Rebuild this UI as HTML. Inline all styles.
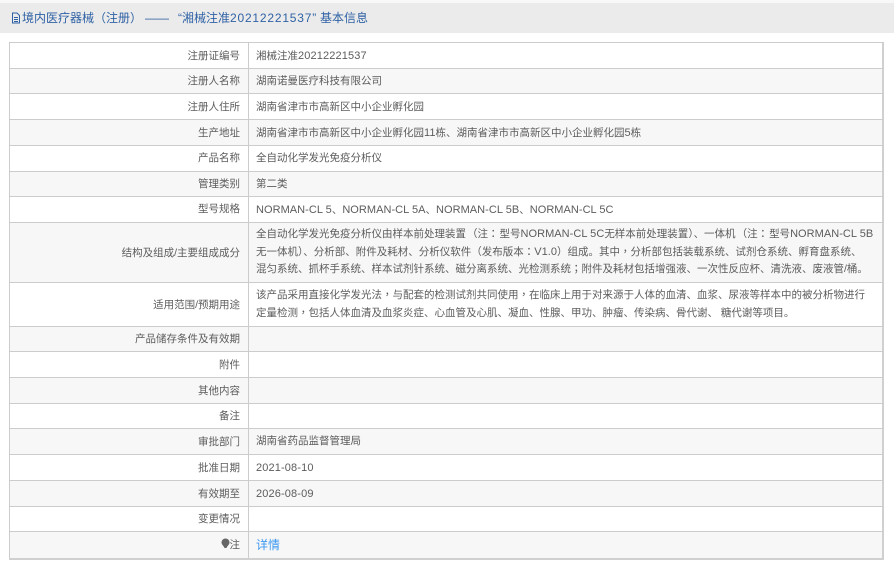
<!DOCTYPE html>
<html><head><meta charset="utf-8">
<style>
html,body{margin:0;padding:0;background:#fff;width:894px;height:564px;overflow:hidden;font-family:"Liberation Sans","Noto Sans CJK SC",sans-serif;}
.top{position:absolute;left:0;top:0;width:894px;height:3px;background:#f8f8f8}
.hd{position:absolute;left:0;top:3px;width:894px;height:30px;background:#ebebeb;color:#2f62a5;font-size:12px;line-height:30px;white-space:nowrap;}
.hd svg{position:absolute;left:11px;top:9px}
.hd span{position:absolute;top:0}
.hd i{font-style:normal;letter-spacing:.8px}
.r{position:absolute;left:9px;width:875px;box-sizing:border-box;border-top:1px solid #ccc;border-left:1px solid #ccc;border-right:2px solid #d0d0d0;font-size:10.500px;color:#5c5c5c;white-space:nowrap}
.g{background:#f7f7f7}
.l{position:absolute;right:642px;top:0;height:24px;line-height:24px}
.l svg{vertical-align:-1px}
.m{top:0;bottom:0;height:auto;display:flex;align-items:center;line-height:18px}
.v{position:absolute;left:238px;right:0;top:0;bottom:0;border-left:1px solid #ccc;padding-left:7px;line-height:24px}
.v div.x{line-height:17.500px;position:absolute;top:3px}
.y .v div.x{top:4px}
.t .l,.t .v,.lt .l,.vt .v{line-height:26px}
b{font-weight:normal;font-size:11px;letter-spacing:.04px}
b.d{letter-spacing:.13px}
u{text-decoration:none;font-family:"Liberation Sans","Noto Sans CJK TC",sans-serif}
a{color:#3d97f0;text-decoration:none;font-size:12px}
.end{position:absolute;left:9px;top:558px;width:875px;height:2px;background:#d0d0d0}
</style></head><body>
<div class="top"></div>
<div class="hd"><svg width="10" height="12" viewBox="0 0 10 12" fill="none" stroke="#2f62a5"><path d="M1.500 1h4.500l2.500 2.500v7.500h-7zM3 5.500h4M3 7.500h4M3 9.500h4"/></svg><span style="left:22px">境内医疗器械<u>（</u>注册<u>）</u></span><span style="left:145px">——</span><span style="left:178px">“湘械注准<i>20212221537</i>”</span><span style="left:320px">基本信息</span></div>

<div class="r t" style="top:42px;height:26px"><div class="l">注册证编号</div><div class="v">湘械注准<b class="d">20212221537</b></div></div>
<div class="r g" style="top:68px;height:25px"><div class="l">注册人名称</div><div class="v">湖南诺曼医疗科技有限公司</div></div>
<div class="r t" style="top:93px;height:26px"><div class="l">注册人住所</div><div class="v">湖南省津市市高新区中小企业孵化园</div></div>
<div class="r g t" style="top:119px;height:26px"><div class="l">生产地址</div><div class="v">湖南省津市市高新区中小企业孵化园<b>11</b>栋、湖南省津市市高新区中小企业孵化园<b>5</b>栋</div></div>
<div class="r" style="top:145px;height:26px"><div class="l">产品名称</div><div class="v">全自动化学发光免疫分析仪</div></div>
<div class="r g" style="top:171px;height:25px"><div class="l">管理类别</div><div class="v">第二类</div></div>
<div class="r vt" style="top:196px;height:26px"><div class="l">型号规格</div><div class="v"><b>NORMAN-CL 5</b>、<b>NORMAN-CL 5A</b>、<b>NORMAN-CL 5B</b>、<b>NORMAN-CL 5C</b></div></div>
<div class="r g" style="top:222px;height:60px"><div class="l m">结构及组成/主要组成成分</div><div class="v"><div class="x">全自动化学发光免疫分析仪由样本前处理装置<u style="padding-left:1px">（</u>注<u style="padding-right:1px">：</u>型号<b>NORMAN-CL 5C</b>无样本前处理装置<u>）</u>、一体机<u style="padding-left:1px">（</u>注<u style="padding-right:1px">：</u>型号<b>NORMAN-CL 5B</b><br>无一体机<u>）</u>、分析部、附件及耗材、分析仪软件<u>（</u>发布版本<u>：</u><b>V1.0</b><u>）</u>组成。其中<u>，</u>分析部包括装载系统、试剂仓系统、孵育盘系统、<br>混匀系统、抓杯手系统、样本试剂针系统、磁分离系统、光检测系统<u>；</u>附件及耗材包括增强液、一次性反应杯、清洗液、废液管/桶。</div></div></div>
<div class="r y" style="top:282px;height:44px"><div class="l m">适用范围/预期用途</div><div class="v"><div class="x">该产品采用直接化学发光法<u>，</u>与配套的检测试剂共同使用<u>，</u>在临床上用于对来源于人体的血清、血浆、尿液等样本中的被分析物进行<br>定量检测<u>，</u>包括人体血清及血浆炎症、心血管及心肌、凝血、性腺、甲功、肿瘤、传染病、骨代谢、 糖代谢等项目。</div></div></div>
<div class="r g" style="top:326px;height:25px"><div class="l">产品储存条件及有效期</div><div class="v"></div></div>
<div class="r t" style="top:351px;height:26px"><div class="l">附件</div><div class="v"></div></div>
<div class="r g t" style="top:377px;height:26px"><div class="l">其他内容</div><div class="v"></div></div>
<div class="r" style="top:403px;height:25px"><div class="l">备注</div><div class="v"></div></div>
<div class="r g lt" style="top:428px;height:26px"><div class="l">审批部门</div><div class="v">湖南省药品监督管理局</div></div>
<div class="r t" style="top:454px;height:26px"><div class="l">批准日期</div><div class="v"><b class="d">2021-08-10</b></div></div>
<div class="r g t" style="top:480px;height:26px"><div class="l">有效期至</div><div class="v"><b class="d">2026-08-09</b></div></div>
<div class="r" style="top:506px;height:25px"><div class="l">变更情况</div><div class="v"></div></div>
<div class="r g t" style="top:531px;height:27px"><div class="l"><svg width="9" height="11" viewBox="0 0 9 11"><path d="M4.500.5a4 4 0 0 1 4 4c0 2-2 3-3 5.500h-2C2.500 7.500.5 6.500.5 4.500a4 4 0 0 1 4-4z" fill="#666"/></svg>注</div><div class="v"><a href="#">详情</a></div></div>
<div class="end"></div>
</body></html>
